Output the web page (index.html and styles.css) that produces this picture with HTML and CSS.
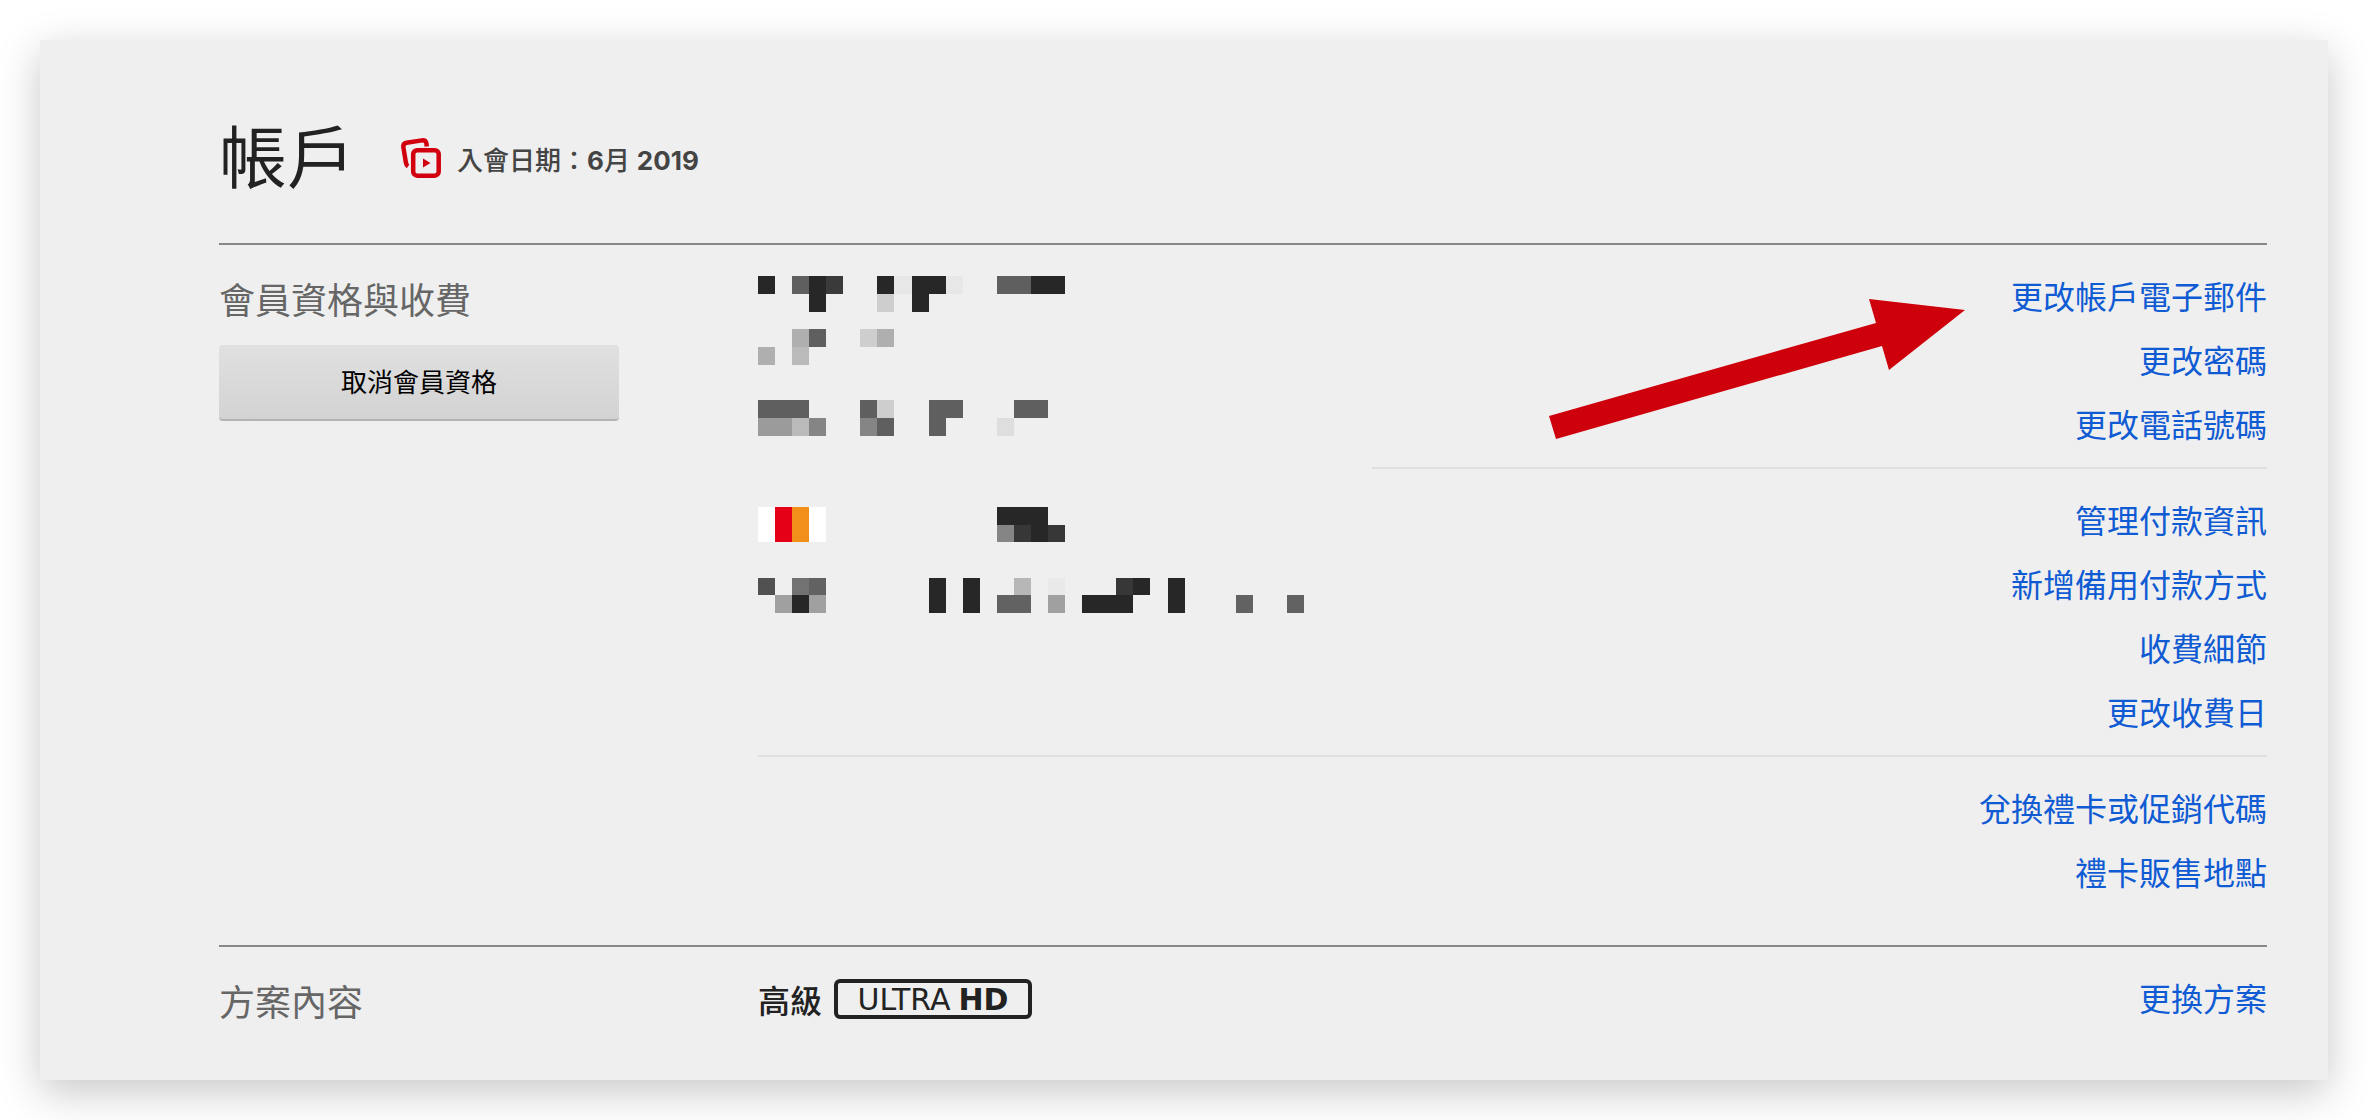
FILE: index.html
```html
<!DOCTYPE html>
<html lang="zh-Hant">
<head>
  <meta charset="UTF-8">
  <meta name="viewport" content="width=device-width, initial-scale=1.0">
  <title>帳戶</title>
  <link rel="stylesheet" href="styles.css">
</head>
<body>
  <main class="account">
    <header class="account-header">
      <h1 class="account-title">帳戶</h1>
      <div class="member-since">
        <svg class="member-icon" viewBox="0 0 40 40" fill="none" stroke="#d2000f" stroke-width="4.500" aria-hidden="true">
          <path d="M7 28.500 Q5.500 27.500 5 25 L2.400 9.500 Q1.800 5.600 5.500 4.800 L21 2.400 Q24.500 2 25.300 5 L25.800 8.500"/>
          <rect x="12.200" y="12.200" width="25.500" height="25.500" rx="4"/>
          <path d="M22 20.500 L29.500 25 L22 29.500 Z" fill="#d2000f" stroke="none"/>
        </svg>
        <span class="member-text">入會日期：<b>6</b>月 <b>2019</b></span>
      </div>
    </header>

    <section class="section">
      <div class="section-side">
        <h2 class="section-title">會員資格與收費</h2>
        <button class="cancel-btn" type="button">取消會員資格</button>
      </div>
      <div class="section-detail">
        <div class="group group-profile">
          <div class="group-info">
            <!-- 個人資料遮罩 -->
            <svg class="mask mask-profile" viewBox="0 0 18 9" preserveAspectRatio="none" shape-rendering="crispEdges" aria-hidden="true">
              <path fill="#272727" d="M0 0h1v1h-1zM3 0h1v2h-1zM7 0h1v1h-1zM9 0h2v1h-1v1h-1zM16 0h2v1h-2z"/>
              <path fill="#3a3a3a" d="M4 0h1v1h-1z"/>
              <path fill="#5f5f5f" d="M2 0h1v1h-1zM14 0h2v1h-2zM3 3h1v1h-1zM0 7h3v1h-3zM6 7h1v1h-1zM7 8h1v1h-1zM10 7h2v1h-1v1h-1zM15 7h2v1h-2z"/>
              <path fill="#e7e7e7" d="M8 0h1v1h-1zM11 0h1v1h-1z"/>
              <path fill="#cecece" d="M7 1h1v1h-1zM6 3h1v1h-1zM7 7h1v1h-1z"/>
              <path fill="#afafaf" d="M2 3h1v1h-1zM7 3h1v1h-1zM0 4h1v1h-1z"/>
              <path fill="#bababa" d="M2 4h1v1h-1zM2 8h1v1h-1z"/>
              <path fill="#9b9b9b" d="M0 8h2v1h-2z"/>
              <path fill="#858585" d="M3 8h1v1h-1zM6 8h1v1h-1z"/>
              <path fill="#dedede" d="M14 8h1v1h-1z"/>
            </svg>
          </div>
          <ul class="links">
            <li><a href="#">更改帳戶電子郵件</a></li>
            <li><a href="#">更改密碼</a></li>
            <li><a href="#">更改電話號碼</a></li>
          </ul>
          <svg class="arrow" viewBox="0 0 416 141" aria-hidden="true">
            <path fill="#ce000c" d="M0 117 L327 24 L320 0 L416 11 L340 71 L333 47 L7 140 Z"/>
          </svg>
        </div>
        <div class="group">
          <div class="group-info">
            <!-- 付款資料遮罩 -->
            <svg class="mask mask-payment" viewBox="0 0 32 6" preserveAspectRatio="none" shape-rendering="crispEdges" aria-hidden="true">
              <path fill="#fff" d="M0 0h1v2h-1zM3 0h1v2h-1z"/>
              <path fill="#e50017" d="M1 0h1v2h-1z"/>
              <path fill="#f28f1b" d="M2 0h1v2h-1z"/>
              <path fill="#272727" d="M14 0h3v2h-1v-1h-2zM2 5h1v1h-1zM10 4h1v2h-1zM12 4h1v2h-1zM22 4h1v1h-1zM19 5h3v1h-3zM24 4h1v2h-1z"/>
              <path fill="#373737" d="M15 1h1v1h-1zM17 1h1v1h-1zM21 4h1v1h-1z"/>
              <path fill="#858585" d="M14 1h1v1h-1z"/>
              <path fill="#515151" d="M0 4h1v1h-1z"/>
              <path fill="#727272" d="M2 4h1v1h-1z"/>
              <path fill="#626262" d="M3 4h1v1h-1zM14 5h2v1h-2zM28 5h1v1h-1zM31 5h1v1h-1z"/>
              <path fill="#a0a0a0" d="M1 5h1v1h-1zM3 5h1v1h-1zM17 5h1v1h-1z"/>
              <path fill="#b7b7b7" d="M15 4h1v1h-1z"/>
              <path fill="#e9e9e9" d="M17 4h1v1h-1z"/>
            </svg>
          </div>
          <ul class="links">
            <li><a href="#">管理付款資訊</a></li>
            <li><a href="#">新增備用付款方式</a></li>
            <li><a href="#">收費細節</a></li>
            <li><a href="#">更改收費日</a></li>
          </ul>
        </div>
        <div class="group">
          <ul class="links">
            <li><a href="#">兌換禮卡或促銷代碼</a></li>
            <li><a href="#">禮卡販售地點</a></li>
          </ul>
        </div>
      </div>
    </section>

    <section class="section section-plan">
      <div class="section-side">
        <h2 class="section-title">方案內容</h2>
      </div>
      <div class="section-detail">
        <div class="group">
          <div class="plan">
            <b class="plan-name">高級</b>
            <span class="plan-badge"><span>ULTRA</span><b>HD</b></span>
          </div>
          <ul class="links">
            <li><a href="#">更換方案</a></li>
          </ul>
        </div>
      </div>
    </section>
  </main>
</body>
</html>
```

FILE: styles.css
```css
* {
  box-sizing: border-box;
}

body {
  margin: 0;
  padding: 40px;
  background-color: #fff;
  color: #222;
  font-family: Inter, "Noto Sans CJK TC", sans-serif;
  font-size: 32px;
}

.account {
  padding: 0 61px 27px 179px;
  background-color: #efefef;
  box-shadow: 0 12px 40px rgba(0, 0, 0, 0.22);
}

.account-header {
  display: flex;
  align-items: center;
  gap: 46px;
  padding: 78px 0 45px;
}
.account-title {
  margin: 0;
  font-size: 68px;
  font-weight: 400;
  line-height: 80px;
}
.member-since {
  display: flex;
  align-items: center;
  gap: 16px;
}
.member-icon {
  width: 40px;
  height: 40px;
}
.member-text {
  color: #444;
  font-size: 26px;
  font-weight: 500;
}
.member-text b {
  font-weight: 700;
}

.section {
  display: grid;
  grid-template-columns: 539fr 1509fr;
  border-top: 2px solid #888;
  padding-bottom: 30px;
}
.section-side {
  padding-top: 24px;
}
.section-title {
  margin: 0;
  color: #666;
  font-size: 36px;
  font-weight: 400;
  line-height: 64px;
}
.cancel-btn {
  width: 400px;
  height: 76px;
  margin-top: 12px;
  padding: 0 0 4px;
  border: 0;
  border-bottom: 2px solid #b2b2b2;
  border-radius: 4px;
  background-image: linear-gradient(#e0e0e0, #d3d3d3);
  color: #000;
  font-family: inherit;
  font-size: 26px;
  cursor: pointer;
}

.group {
  position: relative;
  display: grid;
  grid-template-columns: 614fr 895fr;
  border-bottom: 2px solid #dfdfdf;
}
.group:last-child {
  border-bottom: 0;
}
.group-profile {
  border-bottom: 0;
}
.group-profile .links {
  border-bottom: 2px solid #dfdfdf;
}
.group-info {
  padding-top: 38px;
}
.group-profile .group-info {
  padding-top: 31px;
}

.mask {
  display: block;
}
.mask-profile {
  width: 307px;
  height: 160px;
}
.mask-payment {
  width: 546px;
  height: 106px;
}

.links {
  grid-column: 2;
  margin: 0;
  padding: 21px 0 9px;
  list-style: none;
  line-height: 64px;
  text-align: right;
}
.links a {
  color: #0f5bd3;
  text-decoration: none;
}
.links a:hover {
  text-decoration: underline;
}

.arrow {
  position: absolute;
  top: 54px;
  right: 302px;
  width: 416px;
  height: 141px;
  pointer-events: none;
}

.section-plan {
  padding-bottom: 12px;
}
.plan {
  display: flex;
  align-items: center;
  gap: 12px;
  padding-top: 10px;
}
.plan-name {
  font-weight: 500;
}
.plan-badge {
  display: flex;
  align-items: center;
  justify-content: center;
  gap: 8px;
  min-width: 198px;
  height: 40px;
  border: 4px solid #222;
  border-radius: 6px;
  font-family: "DejaVu Sans", sans-serif;
  font-size: 30px;
  font-weight: 400;
}
.plan-badge b {
  font-weight: 700;
}
```
